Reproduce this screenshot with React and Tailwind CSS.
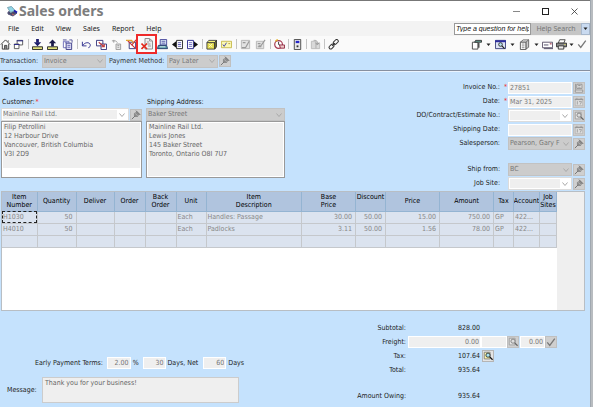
import React from "react";
import clsx from "clsx";

const TEXT = "font-['DejaVu_Sans_Condensed','DejaVu_Sans',sans-serif]";

const menus = ["File", "Edit", "View", "Sales", "Report", "Help"];

const columns = [
  { label: ["Item", "Number"], width: "w-[35px]" },
  { label: ["Quantity"], width: "w-[39px]", right: true },
  { label: ["Deliver"], width: "w-[38px]" },
  { label: ["Order"], width: "w-[31px]" },
  { label: ["Back", "Order"], width: "w-[31px]" },
  { label: ["Unit"], width: "w-[30px]" },
  { label: ["Item", "Description"], width: "" },
  { label: ["Base", "Price"], width: "w-[54px]", right: true },
  { label: ["Discount", "\u00a0"], width: "w-[30px]", right: true },
  { label: ["Price"], width: "w-[54px]", right: true },
  { label: ["Amount"], width: "w-[54px]", right: true },
  { label: ["Tax"], width: "w-[20px]" },
  { label: ["Account"], width: "w-[26px]" },
  { label: ["Job", "Sites"], width: "w-[17px]" },
];

const rows = [
  ["H1030", "50", "", "", "", "Each", "Handles: Passage", "30.00", "50.00", "15.00", "750.00", "GP", "422...", ""],
  ["H4010", "50", "", "", "", "Each", "Padlocks", "3.11", "50.00", "1.56", "78.00", "GP", "422...", ""],
  ["", "", "", "", "", "", "", "", "", "", "", "", "", ""],
];

const icons = {
  home: (
    <>
      <path d="M1 6 6 1l5 5M2.500 5.500V11h7V5.500" fill="#fff" stroke="#333" />
      <path d="M5 11V7h2.500v4M9 1.500V3" stroke="#444" fill="#888" />
    </>
  ),
  windows: (
    <>
      <path d="M4.500 1.500h6v5h-6z" fill="#fff" stroke="#555" />
      <path d="M4 2h7" stroke="#22228a" />
      <path d="M1.500 5.500h5v5h-5z" fill="#fff" stroke="#555" />
      <path d="M1 6h6" stroke="#22228a" />
    </>
  ),
  load: (
    <>
      <path d="M.5 8.500h11v3H.5z" fill="#dfe07a" stroke="#222" />
      <path d="M6 0v4" stroke="#1b1b6a" strokeWidth="3" />
      <path d="M2 3.500h8L6 8z" fill="#1b1b6a" />
    </>
  ),
  save: (
    <>
      <path d="M.5 8.500h11v3H.5z" fill="#dfe07a" stroke="#222" />
      <path d="M6 4v4" stroke="#1b1b4a" strokeWidth="3" />
      <path d="M2 4.500h8L6 .5z" fill="#1b1b4a" />
    </>
  ),
  copies: (
    <>
      <path d="M1.500 2.500h6v7h-6z" fill="#fff" stroke="#6a6ab8" />
      <path d="M4.500 4.500h6v7h-6z" fill="#dcdcf4" stroke="#3a3a86" />
      <path d="M6 7h3M6 9h3M3 4h3" stroke="#6a6ab8" />
      <path d="M8 1h3v3M1 1h4" fill="none" stroke="#55559a" />
    </>
  ),
  undo: (
    <>
      <path d="M1.500 3v4.500H6" fill="none" stroke="#2a2a8a" />
      <path d="M2 7c2-3.500 7-4 8-1 .5 2-.5 3-2 3.500" fill="none" stroke="#2a2a8a" />
    </>
  ),
  adjust: (
    <>
      <path d="M.5 1.500h7v6h-7z" fill="#fff" stroke="#303078" />
      <path d="M5.500 5.500h6v6h-6z" fill="#fff" stroke="#303078" />
      <path d="m3 3.500 6 5M9 5.500v3H6" fill="none" stroke="#c03838" strokeWidth="1.200" />
    </>
  ),
  recur: (
    <>
      <path d="M5.500 5.500h5v6h-5z" fill="#e6e6e6" stroke="#999" />
      <path d="M1 2h4l2 2M3 1v3M7 7h2M7 9h2" fill="none" stroke="#999" />
    </>
  ),
  reverse: (
    <>
      <path d="M3.500 3.500h7v7h-7z" fill="#fff" stroke="#303078" />
      <path d="m2 2 8 8M11 1 6 7" stroke="#c83232" strokeWidth="1.200" />
      <path d="M0 1.500h6L8 4" fill="none" stroke="#e2a42e" strokeWidth="1.500" />
    </>
  ),
  removeOrder: (
    <>
      <path d="M4 .5h4.500l3 2.500v8H4z" fill="#efefef" stroke="#8f8f8f" />
      <path d="M8.500.5V3h3M6 4h2M6.500 6h3M7 8h3" fill="none" stroke="#999" />
      <path d="m.5 5.500 5.500 5.500M6 5.500.5 11" stroke="#e32618" strokeWidth="1.600" />
    </>
  ),
  lookup: (
    <>
      <path d="M3.500.5h7v6h-7z" fill="#d7e6f4" stroke="#45459a" />
      <path d="M5 2.500h4M5 4.500h4" stroke="#5a5aaa" />
      <path d="M1.500 7h9l1 3.500H.5z" fill="#5b9ea8" stroke="#223a6a" />
      <path d="M3 8.500h6" stroke="#d5ecf0" />
    </>
  ),
  previous: (
    <>
      <path d="M5 1.500h6.500v9H5z" fill="#fff" stroke="#222" />
      <path d="M4.500 2.500 0 6l4.500 3.500z" fill="#111" />
      <path d="M6.500 4H10M6.500 6H10M6.500 8H10" stroke="#5a5ab0" />
    </>
  ),
  next: (
    <>
      <path d="M.5 1.500H7v9H.5z" fill="#fff" stroke="#22228a" />
      <path d="M7.500 2.500 12 6 7.500 9.500z" fill="#111" />
      <path d="M2 4h3.500M2 6h3.500M2 8h3.500" stroke="#6a6ac0" />
    </>
  ),
  box: (
    <>
      <path d="m1 4 2-2.500h8.500l-2 2.500z" fill="#f7f477" stroke="#444" />
      <path d="M1 4h8.500v7H1z" fill="#e2db4c" stroke="#444" />
      <path d="m9.500 4 2-2.500V8.500l-2 2.500z" fill="#77762a" stroke="#333" />
      <path d="m3 5 4 4M7 5 3 9" stroke="#fffbc8" />
    </>
  ),
  card: (
    <>
      <path d="M.5 2.500h11v7H.5z" fill="#fbf8b4" stroke="#c5b84b" />
      <path d="m2 6 1.500 2L6 4" fill="none" stroke="#3a3aa8" />
      <path d="M8 5h2" stroke="#b89b40" />
    </>
  ),
  editGray: (
    <>
      <path d="M1.500 1.500h9v9h-9z" fill="#e2e2e2" stroke="#b5b5b5" />
      <path d="M2 9.500h4l4-7M3 4h3" fill="none" stroke="#999" strokeWidth="1.300" />
    </>
  ),
  noteGray: (
    <>
      <path d="M1.500 2.500h8v8h-8z" fill="#e2e2e2" stroke="#b5b5b5" />
      <path d="M3 5h3M3 8.500h4M4 7l2 1 5-7" fill="none" stroke="#999" strokeWidth="1.200" />
    </>
  ),
  clock: (
    <>
      <circle cx="5" cy="6" r="4.200" fill="#fff" stroke="#a63b53" strokeWidth="1.300" />
      <path d="M5 3v3l2 1" fill="none" stroke="#333" />
      <path d="M6 6.500h5.500v3.500H7z" fill="#f0c8c8" stroke="#8c2a44" />
      <path d="M1.500 2.500 4 .5" stroke="#e4b52a" strokeWidth="1.500" />
    </>
  ),
  calculator: (
    <>
      <path d="M2.500.5h7v11h-7z" fill="#e9e9e9" stroke="#444" />
      <path d="M4 2h4v2.500H4z" fill="#2727c8" />
      <path d="M5 7h2v2H5z" fill="#333" />
    </>
  ),
  exportGray: (
    <>
      <path d="M1.500 2.500h5v8h-5zM6.500 4.500h4v6h-4z" fill="#d9d9d9" stroke="#bbb" />
      <path d="M4 1.500c3 0 4 0 4 4M6 4l2 2.500L10 4" fill="none" stroke="#999" />
    </>
  ),
  link: (
    <g fill="none" stroke="#333" strokeWidth="1.100">
      <rect x="5.500" y="1.500" width="6" height="3.500" rx="1.700" transform="rotate(-45 8.500 3.200)" />
      <rect x=".8" y="6.500" width="6" height="3.500" rx="1.700" transform="rotate(-45 3.800 8.200)" />
      <path d="m4.500 7.500 3-3" />
    </g>
  ),
  fileMenu: (
    <>
      <path d="M1.500 3.500h6v7.500h-6z" fill="#fff" stroke="#444" />
      <path d="M4 3.500 5 1.500h6.500v2z" fill="#67a79a" stroke="#333" />
      <path d="M8.500 4v5.500" stroke="#444" strokeWidth="1.500" />
    </>
  ),
  find: (
    <>
      <path d="M.5 1.500h11v9H.5z" fill="#dde3f6" stroke="#39407a" />
      <path d="M0 2.500h12" stroke="#2c2ca0" strokeWidth="2" />
      <circle cx="6" cy="6" r="2" fill="#b8e4ee" stroke="#333" />
      <path d="m7.500 7.500 3 3" stroke="#222" strokeWidth="1.400" />
    </>
  ),
  reports: (
    <>
      <path d="m7.500 2.500 3-1.500v8l-3 2z" fill="#ccc" stroke="#666" />
      <path d="m1.500 3.500 3-2.500h6l-3 2.500z" fill="#eee" stroke="#666" />
      <path d="M1.500 3.500h6v8h-6z" fill="#fff" stroke="#555" />
      <path d="M3 5.500h3M3 7.500h3M3 9.500h3" stroke="#888" />
    </>
  ),
  mail: (
    <>
      <path d="M.5 3.500h11v6H.5z" fill="#fff" stroke="#5a5068" />
      <path d="M2 6.500h5M2 10.500h10" stroke="#4a4560" />
      <path d="M8.500 4.500h2V6h-2z" fill="#b55b6a" />
    </>
  ),
  print: (
    <>
      <path d="M4 .8h6L8.500 4.500H2.500z" fill="#fff" stroke="#444" />
      <path d="M.5 4.500h11v4H.5z" fill="#8a8a8a" stroke="#333" />
      <path d="M2.500 7.500h6v3.500h-6z" fill="#eee" stroke="#333" />
      <path d="M9 6h1.500" stroke="#d8d860" />
    </>
  ),
  check: <path d="m1.500 6.500 3 3.500 6-8" fill="none" stroke="#777" strokeWidth="1.600" />,
  pin: (
    <>
      <path d="m6.500 1 4.500 4.500-1.500.5L8 8.500H5L3.500 7V4l2.500-1.500z" fill="#8d8d8d" />
      <path d="m1 11 4-4M6 .8l5 5" stroke="#777" strokeWidth="1.200" />
      <path d="m5 4 3 3" stroke="#bbb" />
    </>
  ),
  calendar: (
    <>
      <path d="M1.500 2.500h9v8h-9z" fill="#ddd" stroke="#b5b5b5" />
      <path d="M1 3h10" stroke="#999" strokeWidth="1.500" />
      <path d="M4 5v4M6 5.500h3L7.500 9M3.500 1v2M8.500 1v2" fill="none" stroke="#999" />
    </>
  ),
  tracking: (
    <>
      <path d="M3.500 1.500h6v5h-6zM1.500 8.500h9v2.500h-9z" fill="#eee" stroke="#888" />
      <path d="M2 1v7M5 3h3M5 5h3" stroke="#888" />
    </>
  ),
  magnify: (
    <>
      <path d="M1.500 1.500h7v8h-7z" fill="#e6e6e6" stroke="#999" />
      <circle cx="6" cy="5" r="2.500" fill="#ddd" stroke="#777" />
      <path d="m8 7 3.500 3.500" stroke="#666" strokeWidth="1.500" />
    </>
  ),
  magnifyColor: (
    <>
      <path d="M1.500 1.500h7v8h-7z" fill="#fff6a8" stroke="#777" />
      <circle cx="6" cy="5" r="2.500" fill="#a9e4f2" stroke="#222" />
      <path d="m8 7 3.500 3.500" stroke="#111" strokeWidth="1.500" />
    </>
  ),
};

function Icon({ name, className = "size-3" }) {
  return (
    <svg viewBox="0 0 12 12" className={clsx("block shrink-0", className)} aria-hidden="true">
      {icons[name]}
    </svg>
  );
}

function Tool({ name, label, className = "w-[15px]", size = "size-[11px]" }) {
  return (
    <button type="button" aria-label={label} className={clsx("flex h-4 shrink-0 items-center justify-center", className)}>
      <Icon name={name} className={size} />
    </button>
  );
}

function Divider() {
  return (
    <span className="flex w-1 shrink-0 justify-center">
      <span className="h-[10px] w-px bg-[#c4c4c4]" />
    </span>
  );
}

function Caret() {
  return (
    <svg viewBox="0 0 5 5" className="size-[5px] shrink-0" aria-hidden="true">
      <path d="M.5 1.500h4L2.500 4z" fill="#222" />
    </svg>
  );
}

function SmallButton({ icon, label, active }) {
  return (
    <button
      type="button"
      aria-label={label}
      className={clsx(
        "flex h-3 w-3 shrink-0 items-center justify-center border",
        active ? "border-[#b5b5b5] bg-[#e4e4e4]" : "border-[#c0c0c0] bg-[#cfcfcf]"
      )}
    >
      <Icon name={icon} className="size-[10px]" />
    </button>
  );
}

function Combo({ id, value, white, className }) {
  return (
    <div
      className={clsx(
        "flex h-[13px] min-w-0 items-center border",
        white ? "border-[#dcdcdc] bg-white p-px" : "border-[#c2c2c2] bg-[#cccccc] pl-px",
        className
      )}
    >
      <select
        id={id}
        defaultValue={value}
        className={clsx(
          "h-full min-w-0 flex-1 appearance-none overflow-hidden whitespace-nowrap text-[#777] outline-none",
          white ? "bg-[#efefef]" : "bg-[#cccccc]"
        )}
      >
        <option value={value}>{value}</option>
      </select>
      <svg viewBox="0 0 10 8" className="pointer-events-none h-2 w-[10px] shrink-0" aria-hidden="true">
        <path d="m2.500 2.500 2.500 3 2.500-3" fill="none" stroke="#aaa" />
      </svg>
    </div>
  );
}

function Field({ id, label, required, children }) {
  return (
    <div className="flex h-[13px] items-center">
      <label htmlFor={id} className="flex-1 pr-1 text-right whitespace-nowrap">
        {label}
      </label>
      <span className="w-1 text-[#f03030]">{required && "*"}</span>
      <div className="flex w-[77px] items-center gap-px">{children}</div>
    </div>
  );
}

const inputBox = "h-3 min-w-0 border border-white bg-[#efefef] px-px text-[#777] outline-none";

function TitleBar() {
  return (
    <header className="flex h-[21px] items-center border-t border-[#777] bg-white pl-[6px]">
      <svg viewBox="0 0 12 12" className="size-3" aria-hidden="true">
        <path d="m2 7 5-2 4 3-4 3-5-2z" fill="#4a4a6a" stroke="#55557a" />
        <path d="m1.500 2.500 4-1 3.500 4-4.500 2z" fill="#91d7e8" stroke="#7aa5b5" />
        <path d="m8 5.500 3 2" stroke="#1b1bb0" strokeWidth="2" />
        <path d="m6 9 2 1" stroke="#ca6464" />
      </svg>
      <h1 className="ml-px flex-1 pb-px font-['Noto_Sans',sans-serif] text-[14px] leading-[18px] font-bold text-[#7d7d7d]">Sales orders</h1>
      <div className="flex items-center gap-[22px] pr-3">
        <button type="button" aria-label="Minimize" className="h-px w-[7px] bg-[#888]" />
        <button type="button" aria-label="Maximize" className="size-[7px] border border-[#222]" />
        <button type="button" aria-label="Close">
          <svg viewBox="0 0 7 7" className="size-[7px]" aria-hidden="true">
            <path d="m.5.5 6 6M6.500.5l-6 6" stroke="#333" strokeWidth=".8" />
          </svg>
        </button>
      </div>
    </header>
  );
}

function MenuBar() {
  return (
    <nav className="flex h-[15px] items-center bg-[#f3f3f3] pl-2 font-['Noto_Sans',sans-serif] text-[7px] text-[#222]">
      <div className="flex flex-1 gap-3">
        {menus.map((item) => (
          <button type="button" key={item}>
            {item}
          </button>
        ))}
      </div>
      <form className="flex h-3 items-stretch">
        <input
          type="text"
          aria-label="Help question"
          placeholder="Type a question for help"
          className="w-[77px] border border-[#999] bg-white px-px font-['Liberation_Sans',sans-serif] text-[7px] italic placeholder:text-[#111]"
        />
        <button type="button" className="w-[50px] bg-[#c5c5c5] text-[#777]">
          Help Search
        </button>
        <button type="button" aria-label="Help options" className="flex w-[9px] items-center justify-center border border-[#a8b8cc] bg-[#c9daf0]">
          <Caret />
        </button>
      </form>
    </nav>
  );
}

function Toolbar() {
  return (
    <div className="flex h-4 items-center bg-[#fafafa]">
      <Tool name="home" label="Home" className="w-[11px]" />
      <Tool name="windows" label="Windows" />
      <Divider />
      <Tool name="load" label="Recall" />
      <Tool name="save" label="Store" />
      <Tool name="copies" label="Copy" />
      <Divider />
      <Tool name="undo" label="Undo" />
      <Tool name="adjust" label="Adjust" />
      <Tool name="recur" label="Recurring" />
      <Tool name="reverse" label="Reverse" />
      <div className="relative">
        <Tool name="removeOrder" label="Remove order" size="size-3" />
        <span className="pointer-events-none absolute -inset-x-[3px] -inset-y-[2px] border-2 border-[#ee2a2a]" />
      </div>
      <div className="ml-px flex">
        <Tool name="lookup" label="Look up" />
        <Tool name="previous" label="Previous" />
        <Tool name="next" label="Next" />
      </div>
      <Divider />
      <Tool name="box" label="Fill backordered" />
      <Tool name="card" label="Cheque" />
      <Divider />
      <Tool name="editGray" label="Edit" />
      <Tool name="noteGray" label="Notes" />
      <Divider />
      <Tool name="clock" label="Track shipments" className="w-[14px]" />
      <Divider />
      <Tool name="calculator" label="Calculator" className="w-[14px]" />
      <Divider />
      <Tool name="exportGray" label="Export" className="w-[14px]" />
      <Divider />
      <Tool name="link" label="Attachments" className="w-[14px]" />
      <div className="ml-auto flex items-center gap-[2px] pr-[3px]">
        <Tool name="fileMenu" label="Customize" />
        <Caret />
        <Tool name="find" label="Find" />
        <Caret />
        <Tool name="reports" label="Reports" />
        <Caret />
        <Tool name="mail" label="E-mail" className="w-3" />
        <Tool name="print" label="Print" className="w-3" />
        <Caret />
        <Tool name="check" label="Process" className="w-[11px]" size="size-[10px]" />
      </div>
    </div>
  );
}

function TransactionBar() {
  return (
    <div className="flex h-[19px] items-center border-b border-[#8790a0] text-[#333]">
      <label htmlFor="transaction" className="w-[42px]">
        Transaction:
      </label>
      <Combo id="transaction" value="Invoice" className="w-16" />
      <label htmlFor="method" className="w-[61px] pl-[3px] whitespace-nowrap">
        Payment Method:
      </label>
      <Combo id="method" value="Pay Later" className="mr-px w-[51px]" />
      <SmallButton icon="pin" label="Pin payment method" />
    </div>
  );
}

function InvoiceHeader() {
  return (
    <section className="flex items-start pr-[5px]">
      <div>
        <h2 className="pt-px pl-[2px] font-['Noto_Sans',sans-serif] text-[11px] leading-4 font-bold text-black">Sales Invoice</h2>
        <div className="mt-2 flex gap-1">
          <div className="w-[141px]">
            <label htmlFor="customer" className="block h-[11px] pl-px leading-[11px]">
              Customer:<span className="pl-px text-[#f03030]">*</span>
            </label>
            <div className="flex items-center gap-px">
              <Combo id="customer" value="Mainline Rail Ltd." white className="flex-1" />
              <SmallButton icon="pin" label="Pin customer" />
            </div>
            <div className="h-[57px] border border-[#999] bg-white p-px">
              <textarea
                aria-label="Customer address"
                className="block h-[45px] w-full resize-none overflow-hidden bg-[#efefef] px-px leading-[9px] text-[#666] outline-none"
                defaultValue={"Filip Petrollini\n12 Harbour Drive\nVancouver, British Columbia\nV3I 2D9"}
              />
            </div>
          </div>
          <div className="w-[139px]">
            <label htmlFor="shipping" className="block h-[11px] pl-px leading-[11px]">
              Shipping Address:
            </label>
            <Combo id="shipping" value="Baker Street" />
            <div className="h-[57px] border border-[#999] bg-white p-px">
              <textarea
                aria-label="Shipping address"
                className="block h-full w-full resize-none overflow-hidden bg-[#efefef] px-px leading-[9px] text-[#666] outline-none"
                defaultValue={"Mainline Rail Ltd.\nLewis Jones\n145 Baker Street\nToronto, Ontario O8I 7U7"}
              />
            </div>
          </div>
        </div>
      </div>

      <div className="ml-auto flex w-[180px] flex-col gap-px pt-[9px]">
        <Field id="invoiceNo" label="Invoice No.:" required>
          <input id="invoiceNo" type="text" defaultValue="27851" className={clsx(inputBox, "flex-1")} />
          <SmallButton icon="tracking" label="Look up invoice" />
        </Field>
        <Field id="date" label="Date:" required>
          <input id="date" type="text" defaultValue="Mar 31, 2025" className={clsx(inputBox, "flex-1")} />
          <SmallButton icon="calendar" label="Pick date" />
        </Field>
        <Field id="contract" label="DO/Contract/Estimate No.:">
          <Combo id="contract" value="" white className="flex-1" />
          <SmallButton icon="magnify" label="Find estimate" />
        </Field>
        <Field id="shipDate" label="Shipping Date:">
          <input id="shipDate" type="text" className={clsx(inputBox, "flex-1")} />
          <SmallButton icon="calendar" label="Pick shipping date" />
        </Field>
        <Field id="salesperson" label="Salesperson:">
          <Combo id="salesperson" value="Pearson, Gary F" className="flex-1" />
          <SmallButton icon="pin" label="Pin salesperson" />
        </Field>
        <div className="mt-3 flex flex-col gap-px">
          <Field id="shipFrom" label="Ship from:">
            <Combo id="shipFrom" value="BC" className="flex-1" />
            <SmallButton icon="pin" label="Pin location" />
          </Field>
          <Field id="jobSite" label="Job Site:">
            <Combo id="jobSite" value="" white className="flex-1" />
            <SmallButton icon="pin" label="Pin job site" />
          </Field>
        </div>
      </div>
    </section>
  );
}

function ItemTable() {
  return (
    <div className="mt-px mr-[5px] flex min-h-[120px] border border-[#b8bec4] bg-white">
      <div className="flex-1">
        <table className="w-full table-fixed border-collapse">
          <thead>
            <tr className="h-[19px] bg-[#b0c4de] text-black">
              {columns.map((col, i) => (
                <th
                  key={i}
                  className={clsx("overflow-hidden border-r border-b border-[#94b4d2] p-0 text-center leading-[8px] font-normal", col.width)}
                >
                  {col.label.map((line) => (
                    <span key={line} className="flex justify-center">
                      {line}
                    </span>
                  ))}
                </th>
              ))}
            </tr>
          </thead>
          <tbody>
            {rows.map((row, r) => (
              <tr key={r} className="h-3 bg-[#dbe3ef] text-[#888]">
                {row.map((cell, c) => (
                  <td
                    key={c}
                    className={clsx(
                      "overflow-hidden border-r border-b border-[#c5c8cc] p-0 leading-[10px] whitespace-nowrap",
                      columns[c].right ? "pr-[3px] text-right" : "pl-px",
                      r === 0 && c === 0 && "outline outline-dashed -outline-offset-1 outline-[#222]"
                    )}
                  >
                    {cell}
                  </td>
                ))}
              </tr>
            ))}
          </tbody>
        </table>
      </div>
      <div className="w-[27px] bg-[#efefef]" />
    </div>
  );
}

function Terms() {
  return (
    <div className="w-[243px] pt-[46px]">
      <div className="flex h-3 items-center gap-[2px] pl-[34px] whitespace-nowrap">
        <label htmlFor="discount" className="w-[70px]">
          Early Payment Terms:
        </label>
        <input id="discount" type="text" defaultValue="2.00" className={clsx(inputBox, "w-6 text-right")} />
        <span className="w-2">%</span>
        <input aria-label="Discount days" type="text" defaultValue="30" className={clsx(inputBox, "w-[23px] text-right")} />
        <label htmlFor="netDays" className="w-[34px]">
          Days, Net
        </label>
        <input id="netDays" type="text" defaultValue="60" className={clsx(inputBox, "w-[23px] text-right")} />
        <span>Days</span>
      </div>
      <div className="mt-2 flex items-center pr-[5px] pl-[6px]">
        <label htmlFor="message" className="w-[35px]">
          Message:
        </label>
        <textarea
          id="message"
          defaultValue="Thank you for your business!"
          className="h-[26px] flex-1 resize-none overflow-hidden border border-[#ccc] bg-[#efefef] px-[2px] leading-[11px] text-[#666] outline-none"
        />
      </div>
    </div>
  );
}

function TotalRow({ label, value, children }) {
  return (
    <div className="flex h-[14px] items-center">
      <span className="w-[68px] text-right">{label}</span>
      <span className="w-[74px] text-right">{value}</span>
      {children}
    </div>
  );
}

function Totals() {
  return (
    <div className="w-[252px] pt-[10px]">
      <TotalRow label="Subtotal:" value="828.00" />
      <div className="flex h-[14px] items-center">
        <label htmlFor="freight" className="w-[68px] text-right">
          Freight:
        </label>
        <input id="freight" type="text" defaultValue="0.00" className={clsx(inputBox, "ml-[2px] w-[73px] text-right")} />
        <input aria-label="Freight tax code" type="text" className={clsx(inputBox, "w-[26px]")} />
        <SmallButton icon="magnify" label="Freight tax detail" />
        <input aria-label="Freight tax" type="text" defaultValue="0.00" className={clsx(inputBox, "ml-px w-[25px] text-right")} />
        <SmallButton icon="check" label="Accept freight" />
      </div>
      <TotalRow label="Tax:" value="107.64">
        <span className="ml-[2px]">
          <SmallButton icon="magnifyColor" label="Tax detail" active />
        </span>
      </TotalRow>
      <TotalRow label="Total:" value="935.64" />
      <div className="mt-3">
        <TotalRow label="Amount Owing:" value="935.64" />
      </div>
    </div>
  );
}

export default function App() {
  return (
    <div className={clsx("flex min-h-screen bg-[#b8bcc0] text-[7px] leading-[9px] text-[#222]", TEXT)}>
      <div className="min-w-0 flex-1 border-r border-[#a0a8b0] bg-[#c5e2fd]">
        <TitleBar />
        <MenuBar />
        <Toolbar />
        <TransactionBar />
        <main className="border-t border-[#eaf4ff] pl-px">
          <InvoiceHeader />
          <ItemTable />
          <section className="flex justify-between">
            <Terms />
            <Totals />
          </section>
        </main>
      </div>
      <div className="w-[2px]" />
    </div>
  );
}
